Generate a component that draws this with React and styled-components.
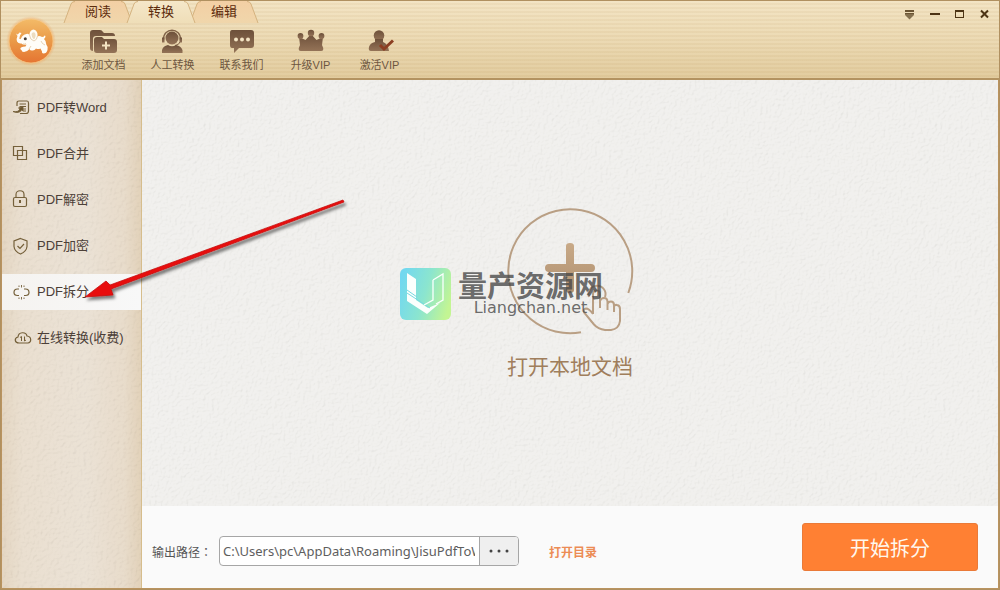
import React, { useState } from "react";
import styled, { createGlobalStyle } from "styled-components";

const Global = createGlobalStyle`
  *, *::before, *::after { box-sizing: border-box; }
  body {
    margin: 0;
    font-family: "Liberation Sans", "Noto Sans CJK SC", sans-serif;
    color: #4c4038;
  }
  button { font: inherit; color: inherit; border: 0; padding: 0; background: none; cursor: pointer; }
`;

const Window = styled.div`
  position: relative;
  display: flex;
  flex-direction: column;
  min-height: 100vh;
  border: 1px solid #b09060;
`;

const Header = styled.header`
  display: flex;
  align-items: flex-start;
  border-bottom: 2px solid #b39361;
  background:
    repeating-linear-gradient(to bottom, rgba(150, 105, 30, 0) 0 2px, rgba(150, 105, 30, 0.06) 2px 4px),
    linear-gradient(to bottom, #f3e4c4, #ecdab4 50%, #e2cc9f);
`;

const Logo = styled.svg`
  flex: none;
  width: 52px;
  height: 52px;
  margin: 15px 6px 0 4px;
`;

const HeaderMain = styled.div`
  flex: 1;
  min-width: 0;
`;

const Tabs = styled.nav`
  display: flex;
`;

const TabButton = styled.button`
  position: relative;
  z-index: ${(p) => (p.$active ? 2 : 1)};
  width: 70px;
  height: 22px;
  margin-right: -7px;
  font-size: 13px;
  line-height: 22px;
  color: #5c2b0c;
`;

const TabShape = styled.svg`
  position: absolute;
  inset: 0;
  z-index: -1;
  width: 100%;
  height: 100%;
`;

const Tools = styled.div`
  display: flex;
  padding: 6px 0 5px 6px;
`;

const ToolButton = styled.button`
  display: flex;
  flex-direction: column;
  align-items: center;
  gap: 4px;
  width: 69px;
  font-size: 11px;
  line-height: 16px;
  color: #6d5640;
  white-space: nowrap;
  svg { width: 28px; height: 24px; }
`;

const WindowControls = styled.div`
  display: flex;
  padding: 5px 2px 0 0;
`;

const ControlButton = styled.button`
  display: grid;
  place-items: center;
  width: 25px;
  height: 17px;
  svg { width: 13px; height: 13px; }
`;

const Body = styled.div`
  display: flex;
  flex: 1;
  border: solid #b9935f;
  border-width: 0 1px 1px;
`;

const Sidebar = styled.aside`
  position: relative;
  flex: none;
  display: flex;
  flex-direction: column;
  gap: 10px;
  width: 140px;
  padding-top: 10px;
  border-right: 1px solid #d6bd8c;
  background: linear-gradient(to right, #e2d2bc, #e8dccb 14%, #e9dfd1 60%, #e6d8c5 88%, #dfcdb2);
`;

const Grain = styled.svg`
  position: absolute;
  inset: 0;
  width: 100%;
  height: 100%;
  pointer-events: none;
  opacity: ${(p) => p.$strength};
`;

const SideItem = styled.button`
  position: relative;
  display: flex;
  align-items: center;
  gap: 7px;
  height: 36px;
  padding: 0 0 3px 8px;
  font-size: 13px;
  white-space: nowrap;
  background: ${(p) => (p.$active ? "linear-gradient(to right, #f5f3f0, #f8f8f8)" : "none")};
  svg { width: 20px; height: 20px; flex: none; }
`;

const Main = styled.main`
  flex: 1;
  min-width: 0;
  display: flex;
  flex-direction: column;
  background: #fafafa;
`;

const DropZone = styled.section`
  position: relative;
  flex: 1;
  display: grid;
  place-items: center;
  padding-top: 2px;
  background: #f0efec;
`;

const OpenButton = styled.button`
  position: relative;
  display: flex;
  flex-direction: column;
  align-items: center;
  gap: 17px;
  font-size: 21px;
  line-height: 30px;
  color: #a07e5c;
  svg { width: 128px; height: 128px; }
`;

const Watermark = styled.div`
  position: absolute;
  top: 50%;
  left: 50%;
  display: flex;
  align-items: center;
  gap: 7px;
  margin: -25px 0 0 -170px;
  pointer-events: none;
  svg { width: 51px; height: 52px; }
`;

const WatermarkText = styled.div`
  display: flex;
  flex-direction: column;
  align-items: center;
  color: rgba(72, 72, 72, 0.8);
`;

const WatermarkName = styled.span`
  font-family: "Noto Sans CJK SC", sans-serif;
  font-size: 29px;
  font-weight: 700;
  line-height: 28px;
`;

const WatermarkUrl = styled.span`
  font-family: "DejaVu Sans", sans-serif;
  font-size: 16px;
  line-height: 20px;
`;

const Footer = styled.footer`
  display: flex;
  align-items: center;
  min-height: 82px;
  padding: 0 20px 0 10px;
  font-size: 12px;
`;

const PathGroup = styled.div`
  display: flex;
  align-items: center;
  flex: 1;
  padding-top: 8px;
`;

const PathLabel = styled.label`
  width: 67px;
  font-family: "Noto Sans CJK TC", sans-serif;
  color: #555;
  white-space: nowrap;
`;

const PathField = styled.div`
  display: flex;
  width: 300px;
  height: 30px;
  border: 1px solid #a6a6a6;
  border-radius: 4px;
  background: #fff;
  overflow: hidden;
`;

const PathInput = styled.input`
  flex: 1;
  min-width: 0;
  border: 0;
  outline: 0;
  padding: 0 4px 0 3px;
  background: none;
  font-family: "Noto Sans", sans-serif;
  font-size: 13px;
  color: #5e5e5e;
`;

const BrowseButton = styled.button`
  display: grid;
  place-items: center;
  width: 39px;
  border-left: 1px solid #a6a6a6;
  background: #efefef;
  svg { width: 20px; height: 4px; }
`;

const FolderLink = styled.a`
  margin-left: 30px;
  font-family: "Noto Sans CJK SC", sans-serif;
  font-weight: 700;
  color: #ec8c55;
  text-decoration: none;
  white-space: nowrap;
`;

const StartButton = styled.button`
  width: 176px;
  height: 48px;
  border: 1px solid #ea7a38;
  border-radius: 3px;
  background: #ff8033;
  color: #fff8ee;
  font-size: 20px;
`;

const Pointer = styled.svg`
  position: absolute;
  left: 79px;
  top: 189px;
  width: 280px;
  height: 120px;
  pointer-events: none;
`;

function Texture({ id, frequency, strength }) {
  return (
    <Grain aria-hidden="true" $strength={strength}>
      <filter id={id} x="0" y="0" width="100%" height="100%">
        <feTurbulence type="fractalNoise" baseFrequency={frequency} numOctaves="2" seed="4" />
        <feDiffuseLighting lightingColor="#ffffff" surfaceScale="2" diffuseConstant="1.15">
          <feDistantLight azimuth="225" elevation="58" />
        </feDiffuseLighting>
      </filter>
      <rect width="100%" height="100%" filter={`url(#${id})`} />
    </Grain>
  );
}

const ElephantLogo = () => (
  <Logo viewBox="0 0 52 52" role="img" aria-label="PDF">
    <defs>
      <linearGradient id="ball" x1="0" y1="0" x2="0" y2="1">
        <stop offset="0" stopColor="#f3bb68" />
        <stop offset="0.5" stopColor="#ea9a48" />
        <stop offset="1" stopColor="#e57432" />
      </linearGradient>
      <radialGradient id="halo">
        <stop offset="0.82" stopColor="#eba05a" stopOpacity="0.6" />
        <stop offset="1" stopColor="#eba05a" stopOpacity="0" />
      </radialGradient>
    </defs>
    <circle cx="26" cy="25" r="25" fill="url(#halo)" />
    <circle cx="26" cy="25" r="22" fill="url(#ball)" stroke="#f8c987" strokeWidth="0.8" />
    <path
      d="M11 17.500L12.800 18.500L14.500 16.500L16.500 17L15 19.500L14.300 22.500Q15 24 16 22.500Q17.500 18.500 21.500 18Q23 17.500 24 18.500L32 20.500Q34.500 19.500 37 21Q39 21 39.500 19.500L40.500 20Q40.500 22 39 23Q41.500 25 41.300 28.500Q43.500 31 42.500 34Q41.500 37.500 38.500 37.500Q36.500 37.500 37 35.500L35.500 32.500Q33 33.500 31 32.500Q29.500 35 27 34.500Q25 34.500 24.500 33Q22 36 19 36Q16.500 36 16.500 34Q14.500 33 16 31.500Q18 30.500 20.500 30.500L21.500 28.500Q18.500 29.500 16.500 27.500Q13.500 28 12 25.500Q11 23 12.500 20Z"
      fill="#fffdf8"
    />
    <path d="M24.500 18Q25 14 28.500 13.500Q33 14.500 32.500 20Q32 24.500 29 25Q25 23.500 24.500 18Z" fill="#fffdf8" />
    <path d="M26.500 18Q27.500 15.500 29.500 16.500Q31.500 18.500 30 22Q29.500 23.500 28.500 23Q26.500 21 26.500 18Z" fill="#ecdcc0" />
    <path d="M24.500 19Q25 24 29 25Q32 24 32.500 20M36 25Q37 28 40 29M24 33L26 30M18 28Q20 28.500 21 27.500" fill="none" stroke="#dcbf96" strokeWidth="0.700" />
    <circle cx="20.300" cy="22.800" r="1.500" fill="#4a4038" />
  </Logo>
);

function Tab({ active, children }) {
  const gid = active ? "tabOn" : "tabOff";
  return (
    <TabButton type="button" $active={active}>
      <TabShape viewBox="0 0 70 22" preserveAspectRatio="none" aria-hidden="true">
        <defs>
          <linearGradient id={gid} x1="0" y1="0" x2="0" y2="1">
            <stop offset="0" stopColor={active ? "#f5e7c9" : "#f3cfa4"} />
            <stop offset="1" stopColor={active ? "#efdeb8" : "#f0d6ab"} />
          </linearGradient>
        </defs>
        <path d="M1 22L8 3Q9 0 12 0H58Q61 0 62 3L69 22Z" fill={`url(#${gid})`} />
        <path d="M1 22L8 3Q9 .5 12 .5M58 .5Q61 .5 62 3L69 22" fill="none" stroke="#d1ae79" strokeWidth="0.9" />
      </TabShape>
      {children}
    </TabButton>
  );
}

const brown = "url(#toolFill)";
const TOOLS = [
  ["添加文档", (
    <g key="a">
      <path d="M0 4Q0 1 3 1H10Q12 1 13 3L14 4H22Q25 4 25 7H6Q3 7 3 10V22Q0 22 0 19Z" fill={brown} />
      <path d="M4 11Q4 8 7 8H12L14 10H24Q27 10 27 13V21Q27 24 24 24H7Q4 24 4 21Z" fill={brown} />
      <path d="M16 12.500V20.500M12 16.500H20" stroke="#f3e3c3" strokeWidth="2" />
    </g>
  )],
  ["人工转换", (
    <g key="b">
      <circle cx="13" cy="9" r="6.500" fill={brown} />
      <path d="M4.500 11C3.500-2 22.500-2 21.500 11" fill="none" stroke="#816348" strokeWidth="1.300" />
      <path d="M3 8.500h2.500v5H3zM20.500 8.500H23v5h-2.500z" fill={brown} />
      <path d="M21 13Q20 16 16 16.500" fill="none" stroke="#816348" />
      <path d="M3 24V21Q4 17 9 16Q13 18.500 17 16Q22 17 23.500 21V24Z" fill={brown} />
    </g>
  )],
  ["联系我们", (
    <g key="c">
      <path d="M4 1H23Q26 1 26 4V16Q26 19 23 19H11L6 24V19H4Q2 19 2 16V4Q2 1 4 1Z" fill={brown} />
      <g fill="#f3e3c3"><circle cx="8" cy="10.500" r="2" /><circle cx="14" cy="10.500" r="2" /><circle cx="20" cy="10.500" r="2" /></g>
    </g>
  )],
  ["升级VIP", (
    <g key="d" fill={brown}>
      <path d="M2 8L8.500 11L14 5L19.500 11L26 8L25 16Q28 22 24 22H4Q0 22 3 16Z" />
      <circle cx="14" cy="4" r="3.200" /><circle cx="3.500" cy="7" r="2.900" /><circle cx="24.500" cy="7" r="2.900" />
    </g>
  )],
  ["激活VIP", (
    <g key="e">
      <circle cx="13" cy="6.500" r="5.300" fill={brown} />
      <path d="M9 10H17V13Q22 15 23 22H5Q2 22 3 18Q4 14 9 13Z" fill={brown} />
      <path d="M14 16L18 20L27 11.500" fill="none" stroke="#8c3f22" strokeWidth="3" />
    </g>
  )],
];

const SIDE_ITEMS = [
  ["PDF转Word", (
    <g key="a">
      <path d="M7 9V6Q7 4 9 4H17Q18.500 4 18.500 6V14Q18.500 16.500 16 16.500H10" />
      <path d="M9.500 7H16M9.500 9.500H16M13 12H16M13 14H16" strokeWidth="1" />
      <path d="M3 14.500Q9 15.500 10 11.500L8.500 11L13 9.500L13 14L11.800 13Q9 17 3 14.500Z" fill="#6a542c" strokeWidth="0.900" />
    </g>
  )],
  ["PDF合并", <g key="b"><path d="M3.500 3.500H12.500V12.500H3.500ZM7.500 7.500H16.500V16.500H7.500Z" /></g>],
  ["PDF解密", (
    <g key="c">
      <rect x="3.500" y="8.500" width="13" height="9" rx="1.500" />
      <path d="M6 8V5.500C6 .5 14 .5 14 5.500V8" /><path d="M10 11V14" strokeWidth="2" />
    </g>
  )],
  ["PDF加密", (
    <g key="d">
      <path d="M10.500 3.500L17 6V11.500Q16.500 16.500 10.500 19Q4.500 16.500 4 11.500V6Z" /><path d="M7.500 11L10 13.500L14 9" />
    </g>
  )],
  ["PDF拆分", (
    <g key="e">
      <path d="M9 8H7.500Q4 8 4 11.500Q4 14.500 7.500 14.500H9M14 8H15.500Q19 8 19 11.500Q19 14.500 15.500 14.500H14" />
      <path d="M9 4.500V6M11.500 4V6.500M14 4.500V6M9 16.500V18M11.500 16V18.500M14 16.500V18" strokeWidth="0.900" />
    </g>
  )],
  ["在线转换(收费)", (
    <g key="f">
      <path d="M9 16C4.500 16 4 11 8 10C8.500 4.500 16 4.500 17 9C22 9.500 21.500 16 18 16Z" />
      <path d="M10 10.500L11.500 9.500V14M14.500 9.500V14L16 13" strokeWidth="1" />
    </g>
  )],
];

export default function App() {
  const [path, setPath] = useState("C:\\Users\\pc\\AppData\\Roaming\\JisuPdfToWord");
  return (
    <>
      <Global />
      <Window>
        <Header>
          <ElephantLogo />
          <HeaderMain>
            <Tabs>
              <Tab>阅读</Tab>
              <Tab active>转换</Tab>
              <Tab>编辑</Tab>
            </Tabs>
            <Tools>
              {TOOLS.map(([label, art]) => (
                <ToolButton type="button" key={label}>
                  <svg viewBox="0 0 28 24" aria-hidden="true">
                    <defs>
                      <linearGradient id="toolFill" x1="0" y1="0" x2="0" y2="1">
                        <stop offset="0" stopColor="#6d503a" />
                        <stop offset="1" stopColor="#947357" />
                      </linearGradient>
                    </defs>
                    {art}
                  </svg>
                  {label}
                </ToolButton>
              ))}
            </Tools>
          </HeaderMain>
          <WindowControls>
            <ControlButton type="button" aria-label="菜单">
              <svg viewBox="0 0 13 13"><path d="M2 2H11V4H2ZM2 5H11V6H2Z" fill="#6b5433" /><path d="M2 6H11V7L6.500 11.500L2 7Z" fill="#84704f" /></svg>
            </ControlButton>
            <ControlButton type="button" aria-label="最小化">
              <svg viewBox="0 0 13 13"><path d="M2 5H12V7H2Z" fill="#4d3415" /></svg>
            </ControlButton>
            <ControlButton type="button" aria-label="最大化">
              <svg viewBox="0 0 13 13"><path d="M2 2H11V10H2ZM3 4V9H10V4Z" fillRule="evenodd" fill="#4d3415" /></svg>
            </ControlButton>
            <ControlButton type="button" aria-label="关闭">
              <svg viewBox="0 0 13 13"><path d="M3 2.500L10 9.500M10 2.500L3 9.500" stroke="#4d3415" strokeWidth="2" /></svg>
            </ControlButton>
          </WindowControls>
        </Header>
        <Body>
          <Sidebar>
            <Texture id="paper" frequency="0.3" strength={0.1} />
            {SIDE_ITEMS.map(([label, art]) => (
              <SideItem type="button" key={label} $active={label === "PDF拆分"}>
                <svg viewBox="0 0 20 20" overflow="visible" fill="none" stroke="#75603a" strokeWidth="1.200" aria-hidden="true">{art}</svg>
                {label}
              </SideItem>
            ))}
          </Sidebar>
          <Main>
            <DropZone>
              <Texture id="wall" frequency="0.35" strength={0.1} />
              <OpenButton type="button">
                <svg viewBox="0 0 128 128" fill="none" stroke="#b99f84" strokeWidth="2" aria-hidden="true">
                  <defs>
                    <linearGradient id="plus" x1="0" y1="0" x2="0" y2="1">
                      <stop offset="0" stopColor="#c8a987" />
                      <stop offset="1" stopColor="#b09070" />
                    </linearGradient>
                  </defs>
                  <path d="M122.300 86A62 62 0 1 0 75 125.300" />
                  <path d="M60 39Q60 36 64 36T68 39V57H85Q89 57 89 61T85 65H68V83Q68 86 64 86T60 83V65H43Q39 65 39 61T43 57H60Z" fill="url(#plus)" stroke="none" />
                  <path d="M83 90A8.500 8.500 0 1 1 99 90" />
                  <path d="M87 107V87Q87 83.500 90.500 83.500T94 87V101M94 94Q95 91 98 91Q101.500 91 101.500 95V103M101.500 97Q102 94.500 105 94.500Q108 94.500 108 98V105M108 99Q109 97.500 111 98Q114 98.500 114 102V114Q113 122 105 123H99Q92 122 88 117.500L78.500 106Q76.500 102 80 101.500Q83 101.500 87 107" />
                </svg>
                打开本地文档
              </OpenButton>
              <Watermark>
                <svg viewBox="0 0 51 52" aria-hidden="true">
                  <defs>
                    <linearGradient id="mark" x1="0" y1="0.3" x2="1" y2="0.6">
                      <stop offset="0" stopColor="#72d8f0" />
                      <stop offset="0.500" stopColor="#8be5cf" />
                      <stop offset="1" stopColor="#c3f593" />
                    </linearGradient>
                  </defs>
                  <rect width="51" height="52" rx="6" fill="url(#mark)" />
                  <path d="M7 5L16 11V32L28 40L40 35L27 46L7 33Z" fill="#fbfffd" />
                  <path d="M7 22L17 29M7 25L30 40" fill="none" stroke="#77d9e0" />
                  <path d="M33 12L43 6V32L36 36M33 12V32L24 37" fill="none" stroke="#fbfffd" strokeWidth="1.300" />
                </svg>
                <WatermarkText>
                  <WatermarkName>量产资源网</WatermarkName>
                  <WatermarkUrl>Liangchan.net</WatermarkUrl>
                </WatermarkText>
              </Watermark>
            </DropZone>
            <Footer>
              <PathGroup>
                <PathLabel htmlFor="output-path">输出路径：</PathLabel>
                <PathField>
                  <PathInput id="output-path" value={path} onChange={(e) => setPath(e.target.value)} />
                  <BrowseButton type="button" aria-label="浏览">
                    <svg viewBox="0 0 20 4" fill="#444"><circle cx="2" cy="2" r="1.500" /><circle cx="10" cy="2" r="1.500" /><circle cx="18" cy="2" r="1.500" /></svg>
                  </BrowseButton>
                </PathField>
                <FolderLink href="#folder">打开目录</FolderLink>
              </PathGroup>
              <StartButton type="button">开始拆分</StartButton>
            </Footer>
          </Main>
        </Body>
        <Pointer viewBox="0 0 280 120" aria-hidden="true">
          <defs>
            <filter id="shade" x="-10%" y="-10%" width="120%" height="130%">
              <feDropShadow dx="2" dy="3" stdDeviation="1.500" floodColor="#000" floodOpacity="0.5" />
            </filter>
          </defs>
          <path d="M263 10L264 12L31 99L33 105L5 107L26 91L30 95Z" fill="#e80f0f" stroke="#c41414" strokeWidth="0.800" strokeLinejoin="round" filter="url(#shade)" />
        </Pointer>
      </Window>
    </>
  );
}
